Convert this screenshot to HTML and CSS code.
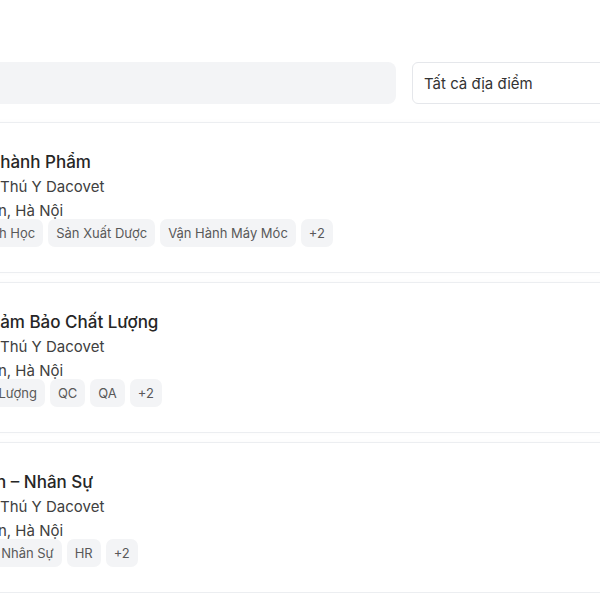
FILE: index.html
```html
<!DOCTYPE html>
<html lang="vi">

<head>
    <meta charset="UTF-8">
    <meta name="viewport" content="width=device-width, initial-scale=1.0">
    <title>Việc làm</title>
    <link rel="stylesheet" href="styles.css">
</head>

<body>
    <div class="page">
        <div class="filters">
            <input class="search" type="text" placeholder="Tìm kiếm vị trí, công ty...">
            <select class="location">
                <option>Tất cả địa điểm</option>
                <option>Hà Nội</option>
                <option>Hồ Chí Minh</option>
            </select>
        </div>

        <div class="jobs">
            <div class="job">
                <h3 class="title">Nhân Viên Sản Xuất Thành Phẩm</h3>
                <div class="company">Công Ty Cổ Phần Thuốc Thú Y Dacovet</div>
                <div class="place">Phú Minh, Huyện Sóc Sơn, Hà Nội</div>
                <div class="tags">
                    <span class="tag">Kỹ Thuật</span>
                    <span class="tag">Công Nghệ Sinh Học</span>
                    <span class="tag">Sản Xuất Dược</span>
                    <span class="tag">Vận Hành Máy Móc</span>
                    <span class="tag">+2</span>
                </div>
            </div>

            <div class="job">
                <h3 class="title">Chuyên Viên Phòng Đảm Bảo Chất Lượng</h3>
                <div class="company">Công Ty Cổ Phần Thuốc Thú Y Dacovet</div>
                <div class="place">Phú Minh, Huyện Sóc Sơn, Hà Nội</div>
                <div class="tags">
                    <span class="tag">Dược Sĩ</span>
                    <span class="tag">Kiểm Soát Chất Lượng</span>
                    <span class="tag">QC</span>
                    <span class="tag">QA</span>
                    <span class="tag">+2</span>
                </div>
            </div>

            <div class="job">
                <h3 class="title">Nhân Viên Hành Chính – Nhân Sự</h3>
                <div class="company">Công Ty Cổ Phần Thuốc Thú Y Dacovet</div>
                <div class="place">Phú Minh, Huyện Sóc Sơn, Hà Nội</div>
                <div class="tags">
                    <span class="tag">Tuyển Dụng</span>
                    <span class="tag">Hành Chính Nhân Sự</span>
                    <span class="tag">HR</span>
                    <span class="tag">+2</span>
                </div>
            </div>
        </div>
    </div>
</body>

</html>
```

FILE: styles.css
```css
:root {
    --text: #262626;
    --muted: #595959;
    --soft: #f3f4f6;
    --line: #eceef1;
}

body {
    margin: 0;
    background-color: #ffffff;
    color: var(--text);
    font-family: Inter, "Noto Sans", sans-serif;
    overflow: hidden;
}

/* the list is wider than the window, only its middle part shows */
.page {
    width: 842px;
    margin-left: -202px;
}

.filters {
    display: flex;
    gap: 16px;
    padding: 62px 0 18px;
}

.search {
    flex: 1;
    height: 42px;
    padding: 0 14px;
    border: none;
    border-radius: 8px;
    background-color: var(--soft);
    font-family: inherit;
    font-size: 15px;
}

.location {
    width: 228px;
    height: 42px;
    padding: 0 11px;
    border: 1px solid #e5e7eb;
    border-radius: 6px;
    background-color: #ffffff;
    color: #333333;
    font-family: inherit;
    font-size: 15px;
    appearance: none;
}

.jobs {
    display: flex;
    flex-direction: column;
    gap: 9px;
}

.job {
    padding: 26px 24px 25px;
    border: 1px solid var(--line);
    border-radius: 10px;
    box-shadow: 0 0 6px rgba(0, 0, 0, 0.025);
}

.title {
    margin: 0;
    font-size: 17px;
    font-weight: 500;
    line-height: 26px;
    color: var(--text);
}

.company,
.place {
    font-size: 15px;
    line-height: 24px;
    color: #404040;
}

.tags {
    display: flex;
    gap: 5px;
    margin-top: -4px;
}

.tag {
    padding: 4px 8px;
    border-radius: 7px;
    background-color: var(--soft);
    color: var(--muted);
    font-size: 13px;
    line-height: 20px;
    white-space: nowrap;
}
```
